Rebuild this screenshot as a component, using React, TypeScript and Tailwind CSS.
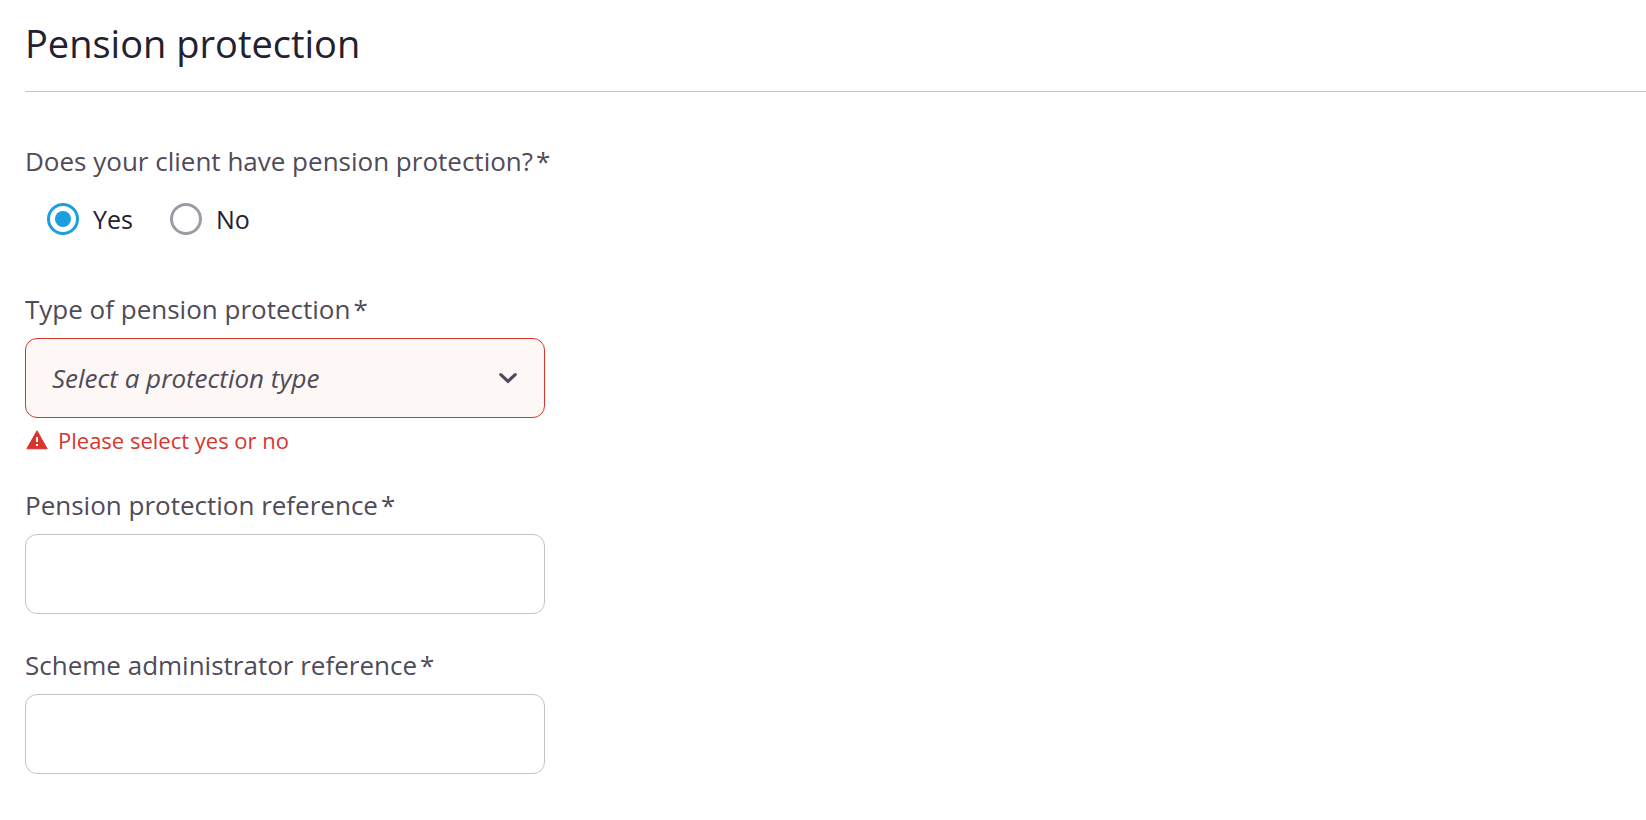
import { useState, type ReactNode } from "react";

function FieldLabel({ htmlFor, children }: { htmlFor: string; children: ReactNode }) {
  return (
    <label htmlFor={htmlFor} className="flex gap-[3px] self-start text-[26px] leading-8 text-[#4f4b59]">
      {children}
      <span aria-hidden="true">*</span>
    </label>
  );
}

function TextField({ id, label }: { id: string; label: string }) {
  const [value, setValue] = useState("");
  return (
    <div className="flex flex-col gap-[13px]">
      <FieldLabel htmlFor={id}>{label}</FieldLabel>
      <input
        id={id}
        type="text"
        required
        value={value}
        onChange={(e) => setValue(e.target.value)}
        className="h-20 w-full rounded-xl border border-[#c4c4c4] bg-white px-[26px] text-[26px] text-[#23202f] outline-none focus:border-[#1c9fdd]"
      />
    </div>
  );
}

function RadioOption({
  label,
  checked,
  onSelect,
}: {
  label: string;
  checked: boolean;
  onSelect: () => void;
}) {
  return (
    <label className="flex cursor-pointer items-center gap-[14px] text-[25px] leading-8 text-[#23202f]">
      <input
        type="radio"
        name="hasProtection"
        checked={checked}
        onChange={onSelect}
        className="size-8 appearance-none rounded-full border-3 border-[#9d9ba3] bg-clip-content p-[5px] checked:border-[#1c9fdd] checked:bg-[#1c9fdd]"
      />
      {label}
    </label>
  );
}

export default function App() {
  const [hasProtection, setHasProtection] = useState(true);
  const [type, setType] = useState("");

  return (
    <main className="min-h-screen bg-white pt-[19px] pl-[25px] font-['Open_Sans',sans-serif]">
      <h1 className="border-b border-[#c4c4c4] pb-6 text-[38px] leading-[48px] text-[#23202f]">
        Pension protection
      </h1>

      <form className="pt-[53px] pb-10" onSubmit={(e) => e.preventDefault()}>
        <fieldset>
          <legend className="flex gap-[3px] text-[26px] leading-8 text-[#4f4b59]">
            Does your client have pension protection?
            <span aria-hidden="true">*</span>
          </legend>
          <div className="flex gap-[37px] pt-[26px] pl-[22px]">
            <RadioOption label="Yes" checked={hasProtection} onSelect={() => setHasProtection(true)} />
            <RadioOption label="No" checked={!hasProtection} onSelect={() => setHasProtection(false)} />
          </div>
        </fieldset>

        <div className="flex max-w-[520px] flex-col gap-[35px] pt-[58px]">
          <div className="flex flex-col">
            <FieldLabel htmlFor="protection-type">Type of pension protection</FieldLabel>
            <div className="relative mt-[13px]">
              <select
                id="protection-type"
                required
                aria-invalid="true"
                aria-describedby="protection-type-error"
                value={type}
                onChange={(e) => setType(e.target.value)}
                className="h-20 w-full appearance-none rounded-xl border border-[#d9352f] bg-[#fdf8f6] pr-16 pl-[26px] text-[26px] text-[#4f4b59] italic outline-none"
              >
                <option value="">Select a protection type</option>
              </select>
              <svg
                className="pointer-events-none absolute top-1/2 right-[27px] h-3 w-5 -translate-y-1/2"
                viewBox="0 0 20 12"
                fill="none"
                stroke="#4f4b59"
                strokeWidth="3.2"
                strokeLinecap="round"
                aria-hidden="true"
              >
                <path d="M2.8 2.6 10 9.3l7.2-6.7" />
              </svg>
            </div>
            <p
              id="protection-type-error"
              className="mt-2 flex items-center gap-[10px] pl-px text-[22px] leading-7 text-[#d9352f]"
            >
              <svg className="h-5 w-[22px]" viewBox="0 0 22 20" aria-hidden="true">
                <path d="M11 .8 21.2 18.8H.8Z" fill="#d9352f" stroke="#d9352f" strokeWidth="1" strokeLinejoin="round" />
                <path d="M10 7h2v5h-2zM10 14h2v2h-2z" fill="#fff" />
              </svg>
              Please select yes or no
            </p>
          </div>

          <TextField id="protection-reference" label="Pension protection reference" />
          <TextField id="administrator-reference" label="Scheme administrator reference" />
        </div>
      </form>
    </main>
  );
}
